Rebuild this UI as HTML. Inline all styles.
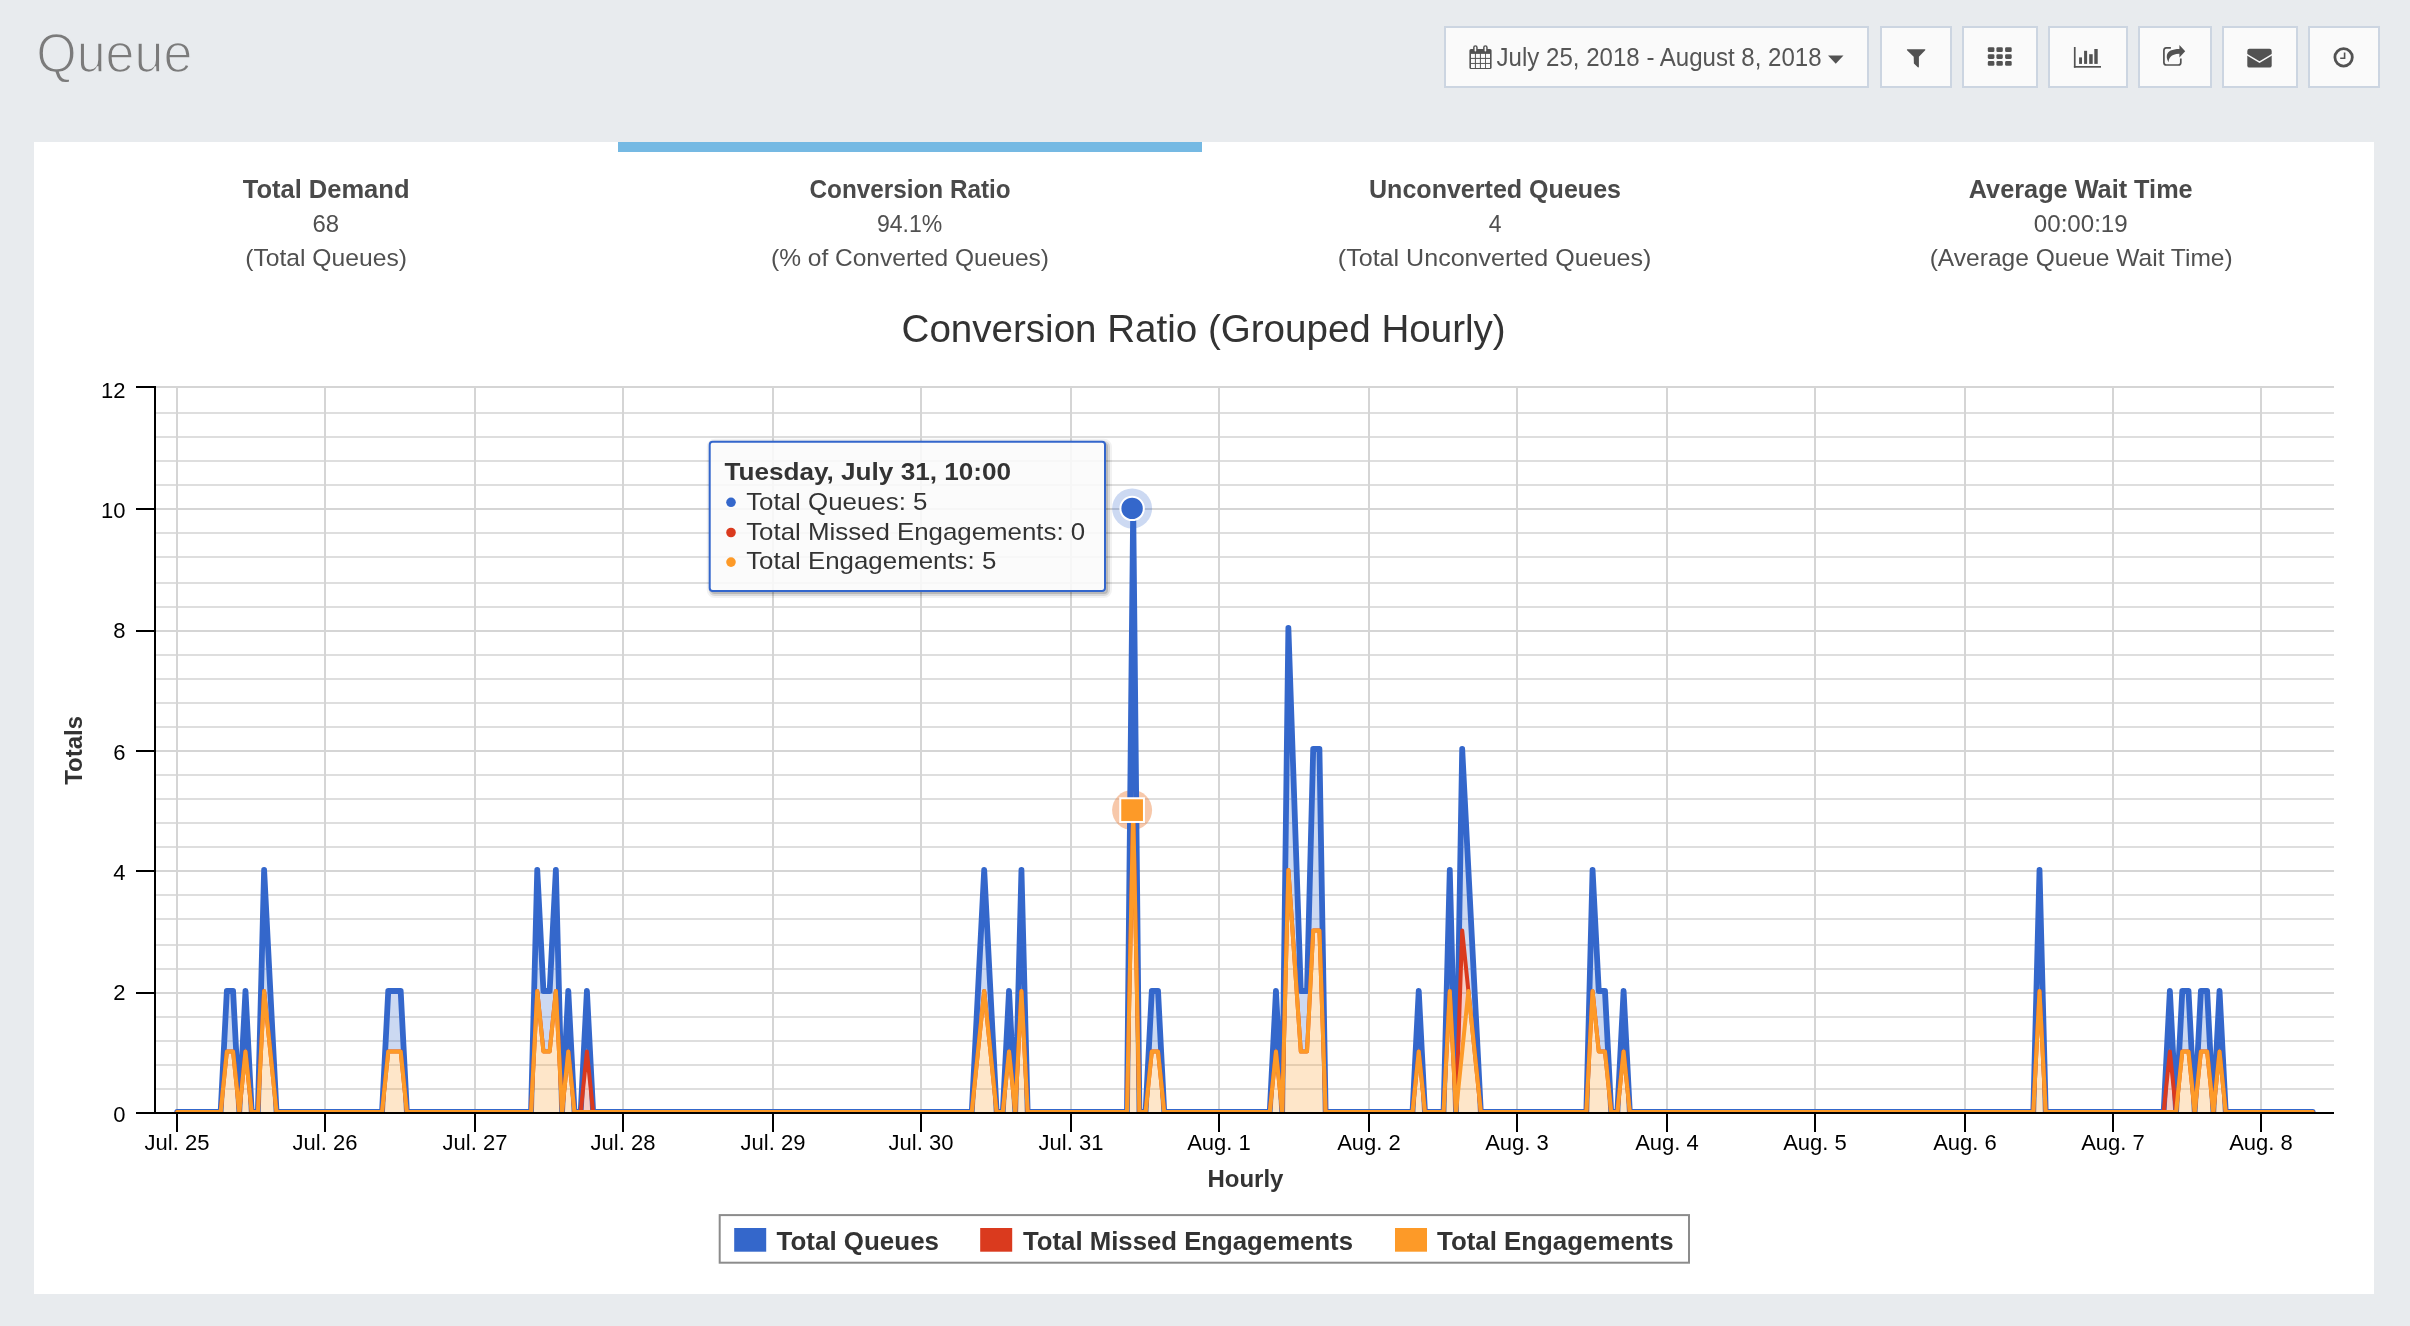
<!DOCTYPE html>
<html><head><meta charset="utf-8"><title>Queue</title>
<style>html,body{margin:0;padding:0;width:2410px;height:1326px;overflow:hidden;background:#E8EBEE;}
svg{position:absolute;left:0;top:0;will-change:transform;font-family:"Liberation Sans",sans-serif;}</style></head>
<body><svg width="2410" height="1326" viewBox="0 0 2410 1326">
<rect x="0" y="0" width="2410" height="1326" fill="#E8EBEE"/>
<text x="36.20" y="71.90" font-size="55" fill="#7B7B7B" textLength="156.18" lengthAdjust="spacingAndGlyphs" stroke="#E8EBEE" stroke-width="1.6">Queue</text>
<rect x="1445" y="27" width="423" height="60" fill="#FAFAFA" stroke="#CCD5E1" stroke-width="2"/>
<rect x="1881" y="27" width="70" height="60" fill="#FAFAFA" stroke="#CCD5E1" stroke-width="2"/>
<rect x="1963" y="27" width="74" height="60" fill="#FAFAFA" stroke="#CCD5E1" stroke-width="2"/>
<rect x="2049" y="27" width="78" height="60" fill="#FAFAFA" stroke="#CCD5E1" stroke-width="2"/>
<rect x="2139" y="27" width="72" height="60" fill="#FAFAFA" stroke="#CCD5E1" stroke-width="2"/>
<rect x="2223" y="27" width="74" height="60" fill="#FAFAFA" stroke="#CCD5E1" stroke-width="2"/>
<rect x="2309" y="27" width="70" height="60" fill="#FAFAFA" stroke="#CCD5E1" stroke-width="2"/>
<text x="1496.60" y="65.60" font-size="25" fill="#555" textLength="325.00" lengthAdjust="spacingAndGlyphs">July 25, 2018 - August 8, 2018</text>
<path d="M1828,55.6 L1843.5,55.6 L1835.75,63.8 Z" fill="#525252"/>
<rect x="1469.4" y="49.1" width="22.2" height="19.9" rx="1.6" fill="#525252"/>
<rect x="1471" y="53.9" width="3.90" height="4.00" fill="#FAFAFA"/>
<rect x="1471" y="58.9" width="3.90" height="4.05" fill="#FAFAFA"/>
<rect x="1471" y="63.9" width="3.90" height="4.10" fill="#FAFAFA"/>
<rect x="1475.9" y="53.9" width="4.00" height="4.00" fill="#FAFAFA"/>
<rect x="1475.9" y="58.9" width="4.00" height="4.05" fill="#FAFAFA"/>
<rect x="1475.9" y="63.9" width="4.00" height="4.10" fill="#FAFAFA"/>
<rect x="1480.9" y="53.9" width="4.10" height="4.00" fill="#FAFAFA"/>
<rect x="1480.9" y="58.9" width="4.10" height="4.05" fill="#FAFAFA"/>
<rect x="1480.9" y="63.9" width="4.10" height="4.10" fill="#FAFAFA"/>
<rect x="1485.9" y="53.9" width="4.10" height="4.00" fill="#FAFAFA"/>
<rect x="1485.9" y="58.9" width="4.10" height="4.05" fill="#FAFAFA"/>
<rect x="1485.9" y="63.9" width="4.10" height="4.10" fill="#FAFAFA"/>
<rect x="1473.1" y="45.3" width="4.6" height="7" rx="2.3" fill="#525252"/>
<rect x="1474.6" y="46.6" width="1.6" height="5" rx="0.8" fill="#FAFAFA"/>
<rect x="1483.1" y="45.3" width="4.6" height="7" rx="2.3" fill="#525252"/>
<rect x="1484.6" y="46.6" width="1.6" height="5" rx="0.8" fill="#FAFAFA"/>
<path d="M1907.2,49.3 L1925,49.3 Q1925.6,49.4 1925.2,50.2 L1918.9,56.8 L1918.9,66.8 Q1918.6,67.8 1917.8,67.2 L1913.9,63.4 L1913.7,56.8 L1907.0,50.2 Q1906.7,49.4 1907.2,49.3 Z" fill="#525252"/>
<rect x="1987.8" y="47.3" width="6.60" height="4.70" rx="1.3" fill="#525252"/>
<rect x="1987.8" y="54.2" width="6.60" height="4.70" rx="1.3" fill="#525252"/>
<rect x="1987.8" y="61.1" width="6.60" height="4.60" rx="1.3" fill="#525252"/>
<rect x="1996.4" y="47.3" width="6.40" height="4.70" rx="1.3" fill="#525252"/>
<rect x="1996.4" y="54.2" width="6.40" height="4.70" rx="1.3" fill="#525252"/>
<rect x="1996.4" y="61.1" width="6.40" height="4.60" rx="1.3" fill="#525252"/>
<rect x="2005.1" y="47.3" width="6.60" height="4.70" rx="1.3" fill="#525252"/>
<rect x="2005.1" y="54.2" width="6.60" height="4.70" rx="1.3" fill="#525252"/>
<rect x="2005.1" y="61.1" width="6.60" height="4.60" rx="1.3" fill="#525252"/>
<rect x="2073.9" y="47" width="1.7" height="20.6" fill="#525252"/>
<rect x="2073.9" y="66" width="27.1" height="1.7" fill="#525252"/>
<rect x="2079.1" y="57.4" width="2.90" height="6.50" fill="#525252"/>
<rect x="2084.1" y="50.8" width="3.00" height="13.10" fill="#525252"/>
<rect x="2089.2" y="54.2" width="3.50" height="9.70" fill="#525252"/>
<rect x="2094.3" y="49" width="3.40" height="14.90" fill="#525252"/>
<path d="M2170.9,47.9 L2166.3,47.9 Q2163.9,48.1 2163.9,50.6 L2163.9,62.6 Q2164.1,65 2166.5,65 L2178.4,65 Q2180.8,64.8 2180.8,62.4 L2180.8,58.6" fill="none" stroke="#525252" stroke-width="1.7"/>
<path d="M2185.2,51.3 L2179.4,45.0 L2179.4,48.9 C2172.5,48.9 2167.2,50.8 2166.8,56.0 C2166.6,58.3 2167.4,60.3 2168.6,62.2 C2168.9,58.3 2170.3,54.0 2179.4,53.7 L2179.4,57.4 Z" fill="#525252"/>
<rect x="2247.3" y="48.8" width="24.4" height="18.8" rx="2.2" fill="#525252"/>
<path d="M2246.5,54.3 L2259.5,62.2 L2272.5,54.3" fill="none" stroke="#FAFAFA" stroke-width="1.5" stroke-linejoin="round"/>
<circle cx="2343.6" cy="57.35" r="8.7" fill="none" stroke="#525252" stroke-width="2.8"/>
<path d="M2344.6,52.4 L2344.6,58.2 L2340.2,58.2" fill="none" stroke="#525252" stroke-width="1.6"/>
<rect x="34" y="142" width="2340" height="1152" fill="#FFFFFF"/>
<rect x="618" y="142" width="584" height="10" fill="#75B9E3"/>
<text x="242.70" y="197.90" font-size="25" font-weight="bold" fill="#4A4A4A" textLength="166.79" lengthAdjust="spacingAndGlyphs">Total Demand</text>
<text x="312.40" y="232.00" font-size="24.5" fill="#505050" textLength="26.60" lengthAdjust="spacingAndGlyphs">68</text>
<text x="245.20" y="266.40" font-size="24.5" fill="#505050" textLength="161.79" lengthAdjust="spacingAndGlyphs">(Total Queues)</text>
<text x="809.50" y="197.90" font-size="25" font-weight="bold" fill="#4A4A4A" textLength="201.22" lengthAdjust="spacingAndGlyphs">Conversion Ratio</text>
<text x="877.00" y="232.00" font-size="24.5" fill="#505050" textLength="65.32" lengthAdjust="spacingAndGlyphs">94.1%</text>
<text x="771.00" y="266.40" font-size="24.5" fill="#505050" textLength="278.00" lengthAdjust="spacingAndGlyphs">(% of Converted Queues)</text>
<text x="1369.00" y="197.90" font-size="25" font-weight="bold" fill="#4A4A4A" textLength="252.00" lengthAdjust="spacingAndGlyphs">Unconverted Queues</text>
<text x="1488.70" y="232.00" font-size="24.5" fill="#505050" textLength="12.78" lengthAdjust="spacingAndGlyphs">4</text>
<text x="1337.80" y="266.40" font-size="24.5" fill="#505050" textLength="313.61" lengthAdjust="spacingAndGlyphs">(Total Unconverted Queues)</text>
<text x="1968.80" y="197.90" font-size="25" font-weight="bold" fill="#4A4A4A" textLength="223.88" lengthAdjust="spacingAndGlyphs">Average Wait Time</text>
<text x="2033.80" y="232.00" font-size="24.5" fill="#505050" textLength="93.92" lengthAdjust="spacingAndGlyphs">00:00:19</text>
<text x="1929.70" y="266.40" font-size="24.5" fill="#505050" textLength="302.99" lengthAdjust="spacingAndGlyphs">(Average Queue Wait Time)</text>
<text x="901.60" y="342.20" font-size="38" fill="#333" textLength="604.09" lengthAdjust="spacingAndGlyphs">Conversion Ratio (Grouped Hourly)</text>
<path d="M155,1089H2334M155,1065H2334M155,1041H2334M155,1017H2334M155,969H2334M155,945H2334M155,919H2334M155,895H2334M155,847H2334M155,823H2334M155,799H2334M155,775H2334M155,727H2334M155,703H2334M155,679H2334M155,655H2334M155,607H2334M155,583H2334M155,557H2334M155,533H2334M155,485H2334M155,461H2334M155,437H2334M155,413H2334" stroke="#DEDEDE" stroke-width="2" fill="none"/>
<path d="M155,1113H2334M155,993H2334M155,871H2334M155,751H2334M155,631H2334M155,509H2334M155,387H2334" stroke="#D5D5D5" stroke-width="2" fill="none"/>
<path d="M177,387V1113M325,387V1113M475,387V1113M623,387V1113M773,387V1113M921,387V1113M1071,387V1113M1219,387V1113M1369,387V1113M1517,387V1113M1667,387V1113M1815,387V1113M1965,387V1113M2113,387V1113M2261,387V1113" stroke="#D5D5D5" stroke-width="2" fill="none"/>
<clipPath id="pc"><rect x="155" y="367" width="2179" height="746"/></clipPath>
<circle cx="1132.1" cy="508.4" r="20" fill="#3467CB" fill-opacity="0.25"/>
<circle cx="1132.1" cy="810.1" r="20" fill="#EE8442" fill-opacity="0.45"/>
<g clip-path="url(#pc)">
<path d="M177.20,1112.00 L220.65,1112.00 L226.86,991.00 L233.07,991.00 L239.28,1112.00 L245.48,991.00 L251.69,1112.00 L257.90,1112.00 L264.11,870.00 L270.32,991.00 L276.52,1112.00 L382.05,1112.00 L388.26,991.00 L394.47,991.00 L400.68,991.00 L406.88,1112.00 L531.04,1112.00 L537.25,870.00 L543.45,991.00 L549.66,991.00 L555.87,870.00 L562.08,1112.00 L568.29,991.00 L574.49,1112.00 L580.70,1112.00 L586.91,991.00 L593.12,1112.00 L971.79,1112.00 L977.99,991.00 L984.20,870.00 L990.41,991.00 L996.62,1112.00 L1002.82,1112.00 L1009.03,991.00 L1015.24,1112.00 L1021.45,870.00 L1027.65,1112.00 L1126.98,1112.00 L1133.19,507.00 L1139.39,1112.00 L1145.60,1112.00 L1151.81,991.00 L1158.02,991.00 L1164.22,1112.00 L1269.76,1112.00 L1275.96,991.00 L1282.17,1112.00 L1288.38,628.00 L1300.79,991.00 L1307.00,991.00 L1313.21,749.00 L1319.42,749.00 L1325.62,1112.00 L1412.53,1112.00 L1418.74,991.00 L1424.95,1112.00 L1443.57,1112.00 L1449.78,870.00 L1455.99,1112.00 L1462.19,749.00 L1468.40,870.00 L1480.82,1112.00 L1586.35,1112.00 L1592.56,870.00 L1598.76,991.00 L1604.97,991.00 L1611.18,1112.00 L1617.39,1112.00 L1623.59,991.00 L1629.80,1112.00 L2033.30,1112.00 L2039.51,870.00 L2045.72,1112.00 L2163.66,1112.00 L2169.87,991.00 L2176.08,1112.00 L2182.29,991.00 L2188.49,991.00 L2194.70,1112.00 L2200.91,991.00 L2207.12,991.00 L2213.33,1112.00 L2219.53,991.00 L2225.74,1112.00 L2312.65,1112.00 L2312.65,1112.00 L2225.74,1112.00 L2219.53,1051.50 L2213.33,1112.00 L2207.12,1051.50 L2200.91,1051.50 L2194.70,1112.00 L2188.49,1051.50 L2182.29,1051.50 L2176.08,1112.00 L2169.87,1051.50 L2163.66,1112.00 L2045.72,1112.00 L2039.51,991.00 L2033.30,1112.00 L1629.80,1112.00 L1623.59,1051.50 L1617.39,1112.00 L1611.18,1112.00 L1604.97,1051.50 L1598.76,1051.50 L1592.56,991.00 L1586.35,1112.00 L1480.82,1112.00 L1468.40,991.00 L1462.19,930.50 L1455.99,1112.00 L1449.78,991.00 L1443.57,1112.00 L1424.95,1112.00 L1418.74,1051.50 L1412.53,1112.00 L1325.62,1112.00 L1319.42,930.50 L1313.21,930.50 L1307.00,1051.50 L1300.79,1051.50 L1288.38,870.00 L1282.17,1112.00 L1275.96,1051.50 L1269.76,1112.00 L1164.22,1112.00 L1158.02,1051.50 L1151.81,1051.50 L1145.60,1112.00 L1139.39,1112.00 L1133.19,809.50 L1126.98,1112.00 L1027.65,1112.00 L1021.45,991.00 L1015.24,1112.00 L1009.03,1051.50 L1002.82,1112.00 L996.62,1112.00 L990.41,1051.50 L984.20,991.00 L977.99,1051.50 L971.79,1112.00 L593.12,1112.00 L586.91,1051.50 L580.70,1112.00 L574.49,1112.00 L568.29,1051.50 L562.08,1112.00 L555.87,991.00 L549.66,1051.50 L543.45,1051.50 L537.25,991.00 L531.04,1112.00 L406.88,1112.00 L400.68,1051.50 L394.47,1051.50 L388.26,1051.50 L382.05,1112.00 L276.52,1112.00 L270.32,1051.50 L264.11,991.00 L257.90,1112.00 L251.69,1112.00 L245.48,1051.50 L239.28,1112.00 L233.07,1051.50 L226.86,1051.50 L220.65,1112.00 L177.20,1112.00 Z" fill="#3467CB" fill-opacity="0.25"/>
<path d="M177.20,1112.00 L220.65,1112.00 L226.86,991.00 L233.07,991.00 L239.28,1112.00 L245.48,991.00 L251.69,1112.00 L257.90,1112.00 L264.11,870.00 L270.32,991.00 L276.52,1112.00 L382.05,1112.00 L388.26,991.00 L394.47,991.00 L400.68,991.00 L406.88,1112.00 L531.04,1112.00 L537.25,870.00 L543.45,991.00 L549.66,991.00 L555.87,870.00 L562.08,1112.00 L568.29,991.00 L574.49,1112.00 L580.70,1112.00 L586.91,991.00 L593.12,1112.00 L971.79,1112.00 L977.99,991.00 L984.20,870.00 L990.41,991.00 L996.62,1112.00 L1002.82,1112.00 L1009.03,991.00 L1015.24,1112.00 L1021.45,870.00 L1027.65,1112.00 L1126.98,1112.00 L1133.19,507.00 L1139.39,1112.00 L1145.60,1112.00 L1151.81,991.00 L1158.02,991.00 L1164.22,1112.00 L1269.76,1112.00 L1275.96,991.00 L1282.17,1112.00 L1288.38,628.00 L1300.79,991.00 L1307.00,991.00 L1313.21,749.00 L1319.42,749.00 L1325.62,1112.00 L1412.53,1112.00 L1418.74,991.00 L1424.95,1112.00 L1443.57,1112.00 L1449.78,870.00 L1455.99,1112.00 L1462.19,749.00 L1468.40,870.00 L1480.82,1112.00 L1586.35,1112.00 L1592.56,870.00 L1598.76,991.00 L1604.97,991.00 L1611.18,1112.00 L1617.39,1112.00 L1623.59,991.00 L1629.80,1112.00 L2033.30,1112.00 L2039.51,870.00 L2045.72,1112.00 L2163.66,1112.00 L2169.87,991.00 L2176.08,1112.00 L2182.29,991.00 L2188.49,991.00 L2194.70,1112.00 L2200.91,991.00 L2207.12,991.00 L2213.33,1112.00 L2219.53,991.00 L2225.74,1112.00 L2312.65,1112.00" fill="none" stroke="#3467CB" stroke-width="5.8" stroke-linejoin="round" stroke-linecap="round"/>
<path d="M177.20,1112.00 L220.65,1112.00 L226.86,1051.50 L233.07,1051.50 L239.28,1112.00 L245.48,1051.50 L251.69,1112.00 L257.90,1112.00 L264.11,991.00 L270.32,1051.50 L276.52,1112.00 L382.05,1112.00 L388.26,1051.50 L394.47,1051.50 L400.68,1051.50 L406.88,1112.00 L531.04,1112.00 L537.25,991.00 L543.45,1051.50 L549.66,1051.50 L555.87,991.00 L562.08,1112.00 L568.29,1051.50 L574.49,1112.00 L580.70,1112.00 L586.91,1051.50 L593.12,1112.00 L971.79,1112.00 L977.99,1051.50 L984.20,991.00 L990.41,1051.50 L996.62,1112.00 L1002.82,1112.00 L1009.03,1051.50 L1015.24,1112.00 L1021.45,991.00 L1027.65,1112.00 L1126.98,1112.00 L1133.19,809.50 L1139.39,1112.00 L1145.60,1112.00 L1151.81,1051.50 L1158.02,1051.50 L1164.22,1112.00 L1269.76,1112.00 L1275.96,1051.50 L1282.17,1112.00 L1288.38,870.00 L1300.79,1051.50 L1307.00,1051.50 L1313.21,930.50 L1319.42,930.50 L1325.62,1112.00 L1412.53,1112.00 L1418.74,1051.50 L1424.95,1112.00 L1443.57,1112.00 L1449.78,991.00 L1455.99,1112.00 L1462.19,930.50 L1468.40,991.00 L1480.82,1112.00 L1586.35,1112.00 L1592.56,991.00 L1598.76,1051.50 L1604.97,1051.50 L1611.18,1112.00 L1617.39,1112.00 L1623.59,1051.50 L1629.80,1112.00 L2033.30,1112.00 L2039.51,991.00 L2045.72,1112.00 L2163.66,1112.00 L2169.87,1051.50 L2176.08,1112.00 L2182.29,1051.50 L2188.49,1051.50 L2194.70,1112.00 L2200.91,1051.50 L2207.12,1051.50 L2213.33,1112.00 L2219.53,1051.50 L2225.74,1112.00 L2312.65,1112.00 L2312.65,1112.00 L2225.74,1112.00 L2219.53,1051.50 L2213.33,1112.00 L2207.12,1051.50 L2200.91,1051.50 L2194.70,1112.00 L2188.49,1051.50 L2182.29,1051.50 L2176.08,1112.00 L2169.87,1112.00 L2163.66,1112.00 L2045.72,1112.00 L2039.51,991.00 L2033.30,1112.00 L1629.80,1112.00 L1623.59,1051.50 L1617.39,1112.00 L1611.18,1112.00 L1604.97,1051.50 L1598.76,1051.50 L1592.56,991.00 L1586.35,1112.00 L1480.82,1112.00 L1468.40,991.00 L1462.19,1051.50 L1455.99,1112.00 L1449.78,991.00 L1443.57,1112.00 L1424.95,1112.00 L1418.74,1051.50 L1412.53,1112.00 L1325.62,1112.00 L1319.42,930.50 L1313.21,930.50 L1307.00,1051.50 L1300.79,1051.50 L1288.38,870.00 L1282.17,1112.00 L1275.96,1051.50 L1269.76,1112.00 L1164.22,1112.00 L1158.02,1051.50 L1151.81,1051.50 L1145.60,1112.00 L1139.39,1112.00 L1133.19,809.50 L1126.98,1112.00 L1027.65,1112.00 L1021.45,991.00 L1015.24,1112.00 L1009.03,1051.50 L1002.82,1112.00 L996.62,1112.00 L990.41,1051.50 L984.20,991.00 L977.99,1051.50 L971.79,1112.00 L593.12,1112.00 L586.91,1112.00 L580.70,1112.00 L574.49,1112.00 L568.29,1051.50 L562.08,1112.00 L555.87,991.00 L549.66,1051.50 L543.45,1051.50 L537.25,991.00 L531.04,1112.00 L406.88,1112.00 L400.68,1051.50 L394.47,1051.50 L388.26,1051.50 L382.05,1112.00 L276.52,1112.00 L270.32,1051.50 L264.11,991.00 L257.90,1112.00 L251.69,1112.00 L245.48,1051.50 L239.28,1112.00 L233.07,1051.50 L226.86,1051.50 L220.65,1112.00 L177.20,1112.00 Z" fill="#DA3A1E" fill-opacity="0.25"/>
<path d="M177.20,1112.00 L220.65,1112.00 L226.86,1051.50 L233.07,1051.50 L239.28,1112.00 L245.48,1051.50 L251.69,1112.00 L257.90,1112.00 L264.11,991.00 L270.32,1051.50 L276.52,1112.00 L382.05,1112.00 L388.26,1051.50 L394.47,1051.50 L400.68,1051.50 L406.88,1112.00 L531.04,1112.00 L537.25,991.00 L543.45,1051.50 L549.66,1051.50 L555.87,991.00 L562.08,1112.00 L568.29,1051.50 L574.49,1112.00 L580.70,1112.00 L586.91,1051.50 L593.12,1112.00 L971.79,1112.00 L977.99,1051.50 L984.20,991.00 L990.41,1051.50 L996.62,1112.00 L1002.82,1112.00 L1009.03,1051.50 L1015.24,1112.00 L1021.45,991.00 L1027.65,1112.00 L1126.98,1112.00 L1133.19,809.50 L1139.39,1112.00 L1145.60,1112.00 L1151.81,1051.50 L1158.02,1051.50 L1164.22,1112.00 L1269.76,1112.00 L1275.96,1051.50 L1282.17,1112.00 L1288.38,870.00 L1300.79,1051.50 L1307.00,1051.50 L1313.21,930.50 L1319.42,930.50 L1325.62,1112.00 L1412.53,1112.00 L1418.74,1051.50 L1424.95,1112.00 L1443.57,1112.00 L1449.78,991.00 L1455.99,1112.00 L1462.19,930.50 L1468.40,991.00 L1480.82,1112.00 L1586.35,1112.00 L1592.56,991.00 L1598.76,1051.50 L1604.97,1051.50 L1611.18,1112.00 L1617.39,1112.00 L1623.59,1051.50 L1629.80,1112.00 L2033.30,1112.00 L2039.51,991.00 L2045.72,1112.00 L2163.66,1112.00 L2169.87,1051.50 L2176.08,1112.00 L2182.29,1051.50 L2188.49,1051.50 L2194.70,1112.00 L2200.91,1051.50 L2207.12,1051.50 L2213.33,1112.00 L2219.53,1051.50 L2225.74,1112.00 L2312.65,1112.00" fill="none" stroke="#DA3A1E" stroke-width="4" stroke-linejoin="round" stroke-linecap="round"/>
<path d="M177.20,1112.00 L220.65,1112.00 L226.86,1051.50 L233.07,1051.50 L239.28,1112.00 L245.48,1051.50 L251.69,1112.00 L257.90,1112.00 L264.11,991.00 L270.32,1051.50 L276.52,1112.00 L382.05,1112.00 L388.26,1051.50 L394.47,1051.50 L400.68,1051.50 L406.88,1112.00 L531.04,1112.00 L537.25,991.00 L543.45,1051.50 L549.66,1051.50 L555.87,991.00 L562.08,1112.00 L568.29,1051.50 L574.49,1112.00 L580.70,1112.00 L586.91,1112.00 L593.12,1112.00 L971.79,1112.00 L977.99,1051.50 L984.20,991.00 L990.41,1051.50 L996.62,1112.00 L1002.82,1112.00 L1009.03,1051.50 L1015.24,1112.00 L1021.45,991.00 L1027.65,1112.00 L1126.98,1112.00 L1133.19,809.50 L1139.39,1112.00 L1145.60,1112.00 L1151.81,1051.50 L1158.02,1051.50 L1164.22,1112.00 L1269.76,1112.00 L1275.96,1051.50 L1282.17,1112.00 L1288.38,870.00 L1300.79,1051.50 L1307.00,1051.50 L1313.21,930.50 L1319.42,930.50 L1325.62,1112.00 L1412.53,1112.00 L1418.74,1051.50 L1424.95,1112.00 L1443.57,1112.00 L1449.78,991.00 L1455.99,1112.00 L1462.19,1051.50 L1468.40,991.00 L1480.82,1112.00 L1586.35,1112.00 L1592.56,991.00 L1598.76,1051.50 L1604.97,1051.50 L1611.18,1112.00 L1617.39,1112.00 L1623.59,1051.50 L1629.80,1112.00 L2033.30,1112.00 L2039.51,991.00 L2045.72,1112.00 L2163.66,1112.00 L2169.87,1112.00 L2176.08,1112.00 L2182.29,1051.50 L2188.49,1051.50 L2194.70,1112.00 L2200.91,1051.50 L2207.12,1051.50 L2213.33,1112.00 L2219.53,1051.50 L2225.74,1112.00 L2312.65,1112.00 L2312.65,1112.00 L177.20,1112.00 Z" fill="#FD9A28" fill-opacity="0.25"/>
<path d="M177.20,1112.00 L220.65,1112.00 L226.86,1051.50 L233.07,1051.50 L239.28,1112.00 L245.48,1051.50 L251.69,1112.00 L257.90,1112.00 L264.11,991.00 L270.32,1051.50 L276.52,1112.00 L382.05,1112.00 L388.26,1051.50 L394.47,1051.50 L400.68,1051.50 L406.88,1112.00 L531.04,1112.00 L537.25,991.00 L543.45,1051.50 L549.66,1051.50 L555.87,991.00 L562.08,1112.00 L568.29,1051.50 L574.49,1112.00 L580.70,1112.00 L586.91,1112.00 L593.12,1112.00 L971.79,1112.00 L977.99,1051.50 L984.20,991.00 L990.41,1051.50 L996.62,1112.00 L1002.82,1112.00 L1009.03,1051.50 L1015.24,1112.00 L1021.45,991.00 L1027.65,1112.00 L1126.98,1112.00 L1133.19,809.50 L1139.39,1112.00 L1145.60,1112.00 L1151.81,1051.50 L1158.02,1051.50 L1164.22,1112.00 L1269.76,1112.00 L1275.96,1051.50 L1282.17,1112.00 L1288.38,870.00 L1300.79,1051.50 L1307.00,1051.50 L1313.21,930.50 L1319.42,930.50 L1325.62,1112.00 L1412.53,1112.00 L1418.74,1051.50 L1424.95,1112.00 L1443.57,1112.00 L1449.78,991.00 L1455.99,1112.00 L1462.19,1051.50 L1468.40,991.00 L1480.82,1112.00 L1586.35,1112.00 L1592.56,991.00 L1598.76,1051.50 L1604.97,1051.50 L1611.18,1112.00 L1617.39,1112.00 L1623.59,1051.50 L1629.80,1112.00 L2033.30,1112.00 L2039.51,991.00 L2045.72,1112.00 L2163.66,1112.00 L2169.87,1112.00 L2176.08,1112.00 L2182.29,1051.50 L2188.49,1051.50 L2194.70,1112.00 L2200.91,1051.50 L2207.12,1051.50 L2213.33,1112.00 L2219.53,1051.50 L2225.74,1112.00 L2312.65,1112.00" fill="none" stroke="#FD9A28" stroke-width="4" stroke-linejoin="round" stroke-linecap="round"/>
</g>
<path d="M155,386V1114 M155,1113H2334" stroke="#000" stroke-width="2" fill="none"/>
<path d="M136,1113H155M136,993H155M136,871H155M136,751H155M136,631H155M136,509H155M136,387H155M177,1113V1132M325,1113V1132M475,1113V1132M623,1113V1132M773,1113V1132M921,1113V1132M1071,1113V1132M1219,1113V1132M1369,1113V1132M1517,1113V1132M1667,1113V1132M1815,1113V1132M1965,1113V1132M2113,1113V1132M2261,1113V1132" stroke="#000" stroke-width="2" fill="none"/>
<text x="125.60" y="1121.60" font-size="22" fill="#000" text-anchor="end">0</text>
<text x="125.60" y="999.90" font-size="22" fill="#000" text-anchor="end">2</text>
<text x="125.60" y="879.90" font-size="22" fill="#000" text-anchor="end">4</text>
<text x="125.60" y="759.70" font-size="22" fill="#000" text-anchor="end">6</text>
<text x="125.60" y="637.90" font-size="22" fill="#000" text-anchor="end">8</text>
<text x="125.60" y="517.80" font-size="22" fill="#000" text-anchor="end">10</text>
<text x="125.60" y="397.70" font-size="22" fill="#000" text-anchor="end">12</text>
<text x="177.00" y="1149.90" font-size="22" fill="#000" text-anchor="middle">Jul. 25</text>
<text x="325.00" y="1149.90" font-size="22" fill="#000" text-anchor="middle">Jul. 26</text>
<text x="475.00" y="1149.90" font-size="22" fill="#000" text-anchor="middle">Jul. 27</text>
<text x="623.00" y="1149.90" font-size="22" fill="#000" text-anchor="middle">Jul. 28</text>
<text x="773.00" y="1149.90" font-size="22" fill="#000" text-anchor="middle">Jul. 29</text>
<text x="921.00" y="1149.90" font-size="22" fill="#000" text-anchor="middle">Jul. 30</text>
<text x="1071.00" y="1149.90" font-size="22" fill="#000" text-anchor="middle">Jul. 31</text>
<text x="1219.00" y="1149.90" font-size="22" fill="#000" text-anchor="middle">Aug. 1</text>
<text x="1369.00" y="1149.90" font-size="22" fill="#000" text-anchor="middle">Aug. 2</text>
<text x="1517.00" y="1149.90" font-size="22" fill="#000" text-anchor="middle">Aug. 3</text>
<text x="1667.00" y="1149.90" font-size="22" fill="#000" text-anchor="middle">Aug. 4</text>
<text x="1815.00" y="1149.90" font-size="22" fill="#000" text-anchor="middle">Aug. 5</text>
<text x="1965.00" y="1149.90" font-size="22" fill="#000" text-anchor="middle">Aug. 6</text>
<text x="2113.00" y="1149.90" font-size="22" fill="#000" text-anchor="middle">Aug. 7</text>
<text x="2261.00" y="1149.90" font-size="22" fill="#000" text-anchor="middle">Aug. 8</text>
<text x="1245.40" y="1186.70" font-size="24" font-weight="bold" fill="#333" text-anchor="middle">Hourly</text>
<text transform="translate(82.1,750.4) rotate(-90)" x="0" y="0" font-size="24" font-weight="bold" fill="#333" text-anchor="middle">Totals</text>
<circle cx="1132.1" cy="508.4" r="11.7" fill="#3467CB" stroke="#fff" stroke-width="2"/>
<rect x="1120.25" y="798.25" width="23.7" height="23.7" fill="#FD9A28" stroke="#fff" stroke-width="2"/>
<rect x="719.7" y="1215.1" width="969.3" height="47.6" fill="none" stroke="#8C8C8C" stroke-width="2"/>
<rect x="734.2" y="1228" width="32" height="23.7" fill="#3467CB"/>
<rect x="980.2" y="1228" width="32" height="23.7" fill="#DA3A1E"/>
<rect x="1395" y="1228" width="32" height="23.7" fill="#FD9A28"/>
<text x="776.60" y="1250.40" font-size="26" font-weight="bold" fill="#333" textLength="162.42" lengthAdjust="spacingAndGlyphs">Total Queues</text>
<text x="1023.00" y="1250.40" font-size="26" font-weight="bold" fill="#333" textLength="330.01" lengthAdjust="spacingAndGlyphs">Total Missed Engagements</text>
<text x="1437.00" y="1250.40" font-size="26" font-weight="bold" fill="#333" textLength="236.59" lengthAdjust="spacingAndGlyphs">Total Engagements</text>
<clipPath id="tco"><path clip-rule="evenodd" d="M600,400H1200V700H600Z M709.7,441.8H1105.0V591.0H709.7Z"/></clipPath>
<g clip-path="url(#tco)">
<rect x="711.7" y="443.8" width="395.3" height="149.2" rx="3" fill="none" stroke="#000" stroke-opacity="0.05" stroke-width="10"/>
<rect x="711.7" y="443.8" width="395.3" height="149.2" rx="3" fill="none" stroke="#000" stroke-opacity="0.1" stroke-width="6"/>
<rect x="711.7" y="443.8" width="395.3" height="149.2" rx="3" fill="none" stroke="#000" stroke-opacity="0.15" stroke-width="2"/>
</g>
<rect x="709.7" y="441.8" width="395.3" height="149.2" rx="3" fill="#FAFAFA" fill-opacity="0.88" stroke="#3366CC" stroke-width="2"/>
<text x="724.40" y="479.70" font-size="24" font-weight="bold" fill="#333" textLength="286.70" lengthAdjust="spacingAndGlyphs">Tuesday, July 31, 10:00</text>
<circle cx="731" cy="502.30" r="4.8" fill="#3467CB"/>
<text x="746.20" y="509.60" font-size="24" fill="#333" textLength="181.21" lengthAdjust="spacingAndGlyphs">Total Queues: 5</text>
<circle cx="731" cy="532.50" r="4.8" fill="#DA3A1E"/>
<text x="746.20" y="539.80" font-size="24" fill="#333" textLength="338.98" lengthAdjust="spacingAndGlyphs">Total Missed Engagements: 0</text>
<circle cx="731" cy="562.10" r="4.8" fill="#FD9A28"/>
<text x="746.20" y="569.40" font-size="24" fill="#333" textLength="250.10" lengthAdjust="spacingAndGlyphs">Total Engagements: 5</text>
</svg></body></html>
